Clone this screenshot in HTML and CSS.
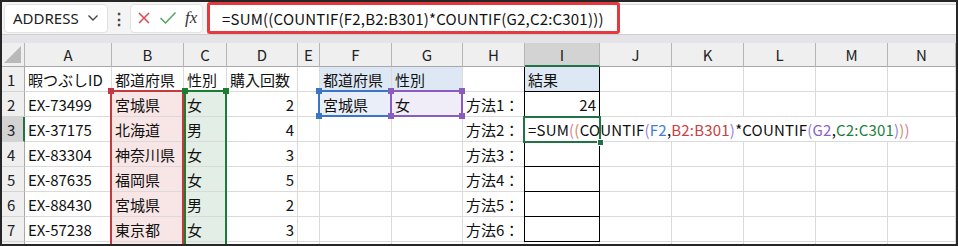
FILE: index.html
```html
<!DOCTYPE html>
<html lang="ja">
<head>
<meta charset="UTF-8">
<title>COUNTIF</title>
<link rel="stylesheet" href="styles.css">
</head>
<body>
<div class="window">

  <div class="formula-bar">
    <div class="name-box">
      <span>ADDRESS</span>
      <svg width="12" height="8" viewBox="0 0 12 8"><polyline points="1.5,1.5 6,6 10.5,1.5" fill="none" stroke="#444" stroke-width="1.4"/></svg>
    </div>
    <div class="dots">⋮</div>
    <div class="fx-box">
      <svg width="14" height="14" viewBox="0 0 14 14"><path d="M2 2 L12 12 M12 2 L2 12" stroke="#e0464b" stroke-width="1.5"/></svg>
      <svg width="18" height="14" viewBox="0 0 18 14"><polyline points="1.5,7 6.5,12 16.5,1.5" fill="none" stroke="#54a35c" stroke-width="1.5"/></svg>
      <span class="fx">fx</span>
    </div>
    <div class="formula-input">
      <div class="formula-mark">=SUM((COUNTIF(F2,B2:B301)*COUNTIF(G2,C2:C301)))</div>
    </div>
  </div>

  <div class="strip"></div>

  <div class="sheet">
    <div class="grid">
      <!-- column headers -->
      <div class="corner"></div>
      <div class="hd">A</div><div class="hd">B</div><div class="hd">C</div><div class="hd">D</div><div class="hd">E</div>
      <div class="hd">F</div><div class="hd">G</div><div class="hd">H</div><div class="hd sel">I</div><div class="hd">J</div>
      <div class="hd">K</div><div class="hd">L</div><div class="hd">M</div><div class="hd">N</div>

      <!-- 1 -->
      <div class="rh">1</div>
      <div class="c">暇つぶしID</div><div class="c">都道府県</div><div class="c">性別</div><div class="c">購入回数</div><div class="c"></div>
      <div class="c blue">都道府県</div><div class="c blue">性別</div><div class="c"></div><div class="c res blue">結果</div>
      <div class="c"></div><div class="c"></div><div class="c"></div><div class="c"></div><div class="c"></div>

      <!-- 2 -->
      <div class="rh">2</div>
      <div class="c">EX-73499</div><div class="c pink">宮城県</div><div class="c mint">女</div><div class="c num">2</div><div class="c"></div>
      <div class="c f2">宮城県</div><div class="c g2">女</div><div class="c">方法1：</div><div class="c res num">24</div>
      <div class="c"></div><div class="c"></div><div class="c"></div><div class="c"></div><div class="c"></div>

      <!-- 3 -->
      <div class="rh sel">3</div>
      <div class="c">EX-37175</div><div class="c pink">北海道</div><div class="c mint">男</div><div class="c num">4</div><div class="c"></div>
      <div class="c"></div><div class="c"></div><div class="c">方法2：</div>
      <div class="c editing">=SUM<span class="p1">(</span><span class="p2">(</span>COUNTIF<span class="p3">(</span><span class="r-blue">F2</span>,<span class="r-red">B2:B301</span><span class="p3">)</span>*COUNTIF<span class="p3">(</span><span class="r-purple">G2</span>,<span class="r-green">C2:C301</span><span class="p3">)</span><span class="p2">)</span><span class="p1">)</span></div>

      <!-- 4 -->
      <div class="rh">4</div>
      <div class="c">EX-83304</div><div class="c pink">神奈川県</div><div class="c mint">女</div><div class="c num">3</div><div class="c"></div>
      <div class="c"></div><div class="c"></div><div class="c">方法3：</div><div class="c res"></div>
      <div class="c"></div><div class="c"></div><div class="c"></div><div class="c"></div><div class="c"></div>

      <!-- 5 -->
      <div class="rh">5</div>
      <div class="c">EX-87635</div><div class="c pink">福岡県</div><div class="c mint">女</div><div class="c num">5</div><div class="c"></div>
      <div class="c"></div><div class="c"></div><div class="c">方法4：</div><div class="c res"></div>
      <div class="c"></div><div class="c"></div><div class="c"></div><div class="c"></div><div class="c"></div>

      <!-- 6 -->
      <div class="rh">6</div>
      <div class="c">EX-88430</div><div class="c pink">宮城県</div><div class="c mint">男</div><div class="c num">2</div><div class="c"></div>
      <div class="c"></div><div class="c"></div><div class="c">方法5：</div><div class="c res"></div>
      <div class="c"></div><div class="c"></div><div class="c"></div><div class="c"></div><div class="c"></div>

      <!-- 7 -->
      <div class="rh">7</div>
      <div class="c">EX-57238</div><div class="c pink">東京都</div><div class="c mint">女</div><div class="c num">3</div><div class="c"></div>
      <div class="c"></div><div class="c"></div><div class="c">方法6：</div><div class="c res"></div>
      <div class="c"></div><div class="c"></div><div class="c"></div><div class="c"></div><div class="c"></div>

      <!-- 8 (only its top edge is visible) -->
      <div class="rh"></div>
      <div class="c"></div><div class="c pink"></div><div class="c mint"></div><div class="c"></div><div class="c"></div>
      <div class="c"></div><div class="c"></div><div class="c"></div><div class="c"></div>
      <div class="c"></div><div class="c"></div><div class="c"></div><div class="c"></div><div class="c"></div>
    </div>

    <!-- reference highlights drawn over the grid -->
    <div class="range range-b"><i class="h tl"></i></div>
    <div class="range range-c"><i class="h tl"></i><i class="h tr"></i></div>
    <div class="range range-f"><i class="h tl"></i><i class="h tr"></i><i class="h bl"></i><i class="h br"></i></div>
    <div class="range range-g"><i class="h tl"></i><i class="h tr"></i><i class="h bl"></i><i class="h br"></i></div>
    <div class="active"><i class="fill"></i></div>
  </div>

</div>
</body>
</html>
```

FILE: styles.css
```css
*{ box-sizing: border-box; }

body{
    margin: 0;
    font-family: "Noto Sans CJK JP", "Noto Sans", sans-serif;
    font-size: 15px;
    color: #111;
}

.window{
    width: 958px;
    height: 246px;
    border: 2px solid #262626;
    overflow: hidden;
    background: #fff;
}

/* ---------- formula bar ---------- */
.formula-bar{
    display: flex;
    align-items: center;
    height: 33px;
    background: #f4f4f4;
    border-bottom: 1px solid #cfcfcf;
    padding-left: 2px;
}

.name-box{
    display: flex;
    align-items: center;
    justify-content: space-between;
    width: 104px;
    height: 29px;
    padding: 0 8px 0 8px;
    background: #fff;
    border: 1px solid #e2e2e2;
    border-radius: 4px;
    font-family: "Noto Sans", sans-serif;
    font-size: 15px;
    color: #222;
}

.dots{
    width: 22px;
    text-align: center;
    font-size: 16px;
    font-weight: bold;
    color: #444;
}

.fx-box{
    display: flex;
    align-items: center;
    gap: 8px;
    width: 73px;
    height: 29px;
    padding-left: 6px;
    background: #fff;
    border: 1px solid #e2e2e2;
    border-radius: 4px;
}
.fx{
    font-family: "Liberation Serif", serif;
    font-style: italic;
    font-size: 17px;
    color: #333;
}

.formula-input{
    flex: 1;
    align-self: stretch;
    margin: 2px 0 0 4px;
    background: #fff;
    border-top: 1px solid #d8d8d8;
    border-left: 1px solid #d8d8d8;
}
.formula-mark{
    width: 413px;
    height: 32px;
    margin: -3px 0 0 -1px;
    padding: 3px 0 0 12px;
    border: 3px solid #e4393d;
    border-radius: 3px;
    font-size: 15px;
    line-height: 22px;
    letter-spacing: 0.2px;
    white-space: nowrap;
}

.strip{
    height: 8px;
    background: #e4e4e8;
}

/* ---------- sheet ---------- */
.sheet{
    position: relative;
    height: 201px;
    overflow: hidden;
}

.grid{
    display: grid;
    grid-template-columns: 23px 87px 72px 43px 71px 22px 72px 71px 62px 75px 72px 72px 72px 72px 68px;
    grid-template-rows: 24px repeat(8, 25px);
}

.corner{
    position: relative;
    background: #efefef;
    border-right: 1px solid #b5b5b5;
    border-bottom: 1px solid #a8a8a8;
}
.corner::after{
    content: "";
    position: absolute;
    right: 3px;
    bottom: 3px;
    border-left: 17px solid transparent;
    border-bottom: 17px solid #b9b9b9;
}

.hd{
    display: flex;
    align-items: center;
    justify-content: center;
    background: #efefef;
    border-right: 1px solid #b5b5b5;
    border-bottom: 1px solid #a8a8a8;
    color: #222;
}
.hd.sel{
    background: #d3d3d3;
    border-bottom: 2px solid #217346;
}

.rh{
    display: flex;
    align-items: center;
    padding-left: 5px;
    background: #efefef;
    border-right: 1px solid #a8a8a8;
    border-bottom: 1px solid #d4d4d4;
    color: #222;
}
.rh.sel{
    background: #d3d3d3;
    border-right: 2px solid #217346;
}

.c{
    display: flex;
    align-items: center;
    padding: 0 3px;
    white-space: nowrap;
    border-right: 1px solid #dadada;
    border-bottom: 1px solid #dadada;
}
.c.num{ justify-content: flex-end; }

.pink{ background: #f8e5e5; }
.mint{ background: #e3efe6; }
.blue{ background: #dde8f4; }
.f2{ background: #e9eef8; }
.g2{ background: #f1edf8; }

.res{
    margin-left: -1px;
    border-left: 1px solid #000;
    border-right: 1px solid #000;
    border-bottom: 1px solid #000;
}

.editing{
    grid-column: span 6;
    border-right: none;
    letter-spacing: 0.2px;
    color: #111;
}
.p1{ color: #e07aa6; }
.p2{ color: #d18e54; }
.p3{ color: #9b80d6; }
.r-blue{ color: #3b7dd8; }
.r-red{ color: #c9403f; }
.r-purple{ color: #8b5fc4; }
.r-green{ color: #1c7f3c; }

/* ---------- highlights ---------- */
.range{
    position: absolute;
    border: 2px solid;
}
.range-b{ left: 108px; top: 47px; width: 74px; height: 200px; border-color: #c4383f; }
.range-c{ left: 182px; top: 47px; width: 43px; height: 200px; border-color: #1b7d34; }
.range-f{ left: 316px; top: 47px; width: 74px; height: 27px; border-color: #3a75c8; }
.range-g{ left: 388px; top: 47px; width: 73px; height: 27px; border-color: #8a5cc0; }

.h{
    position: absolute;
    width: 6px;
    height: 6px;
    background: currentColor;
}
.range-b .h{ color: #c4383f; }
.range-c .h{ color: #1b7d34; }
.range-f .h{ color: #3a75c8; }
.range-g .h{ color: #8a5cc0; }
.h.tl{ left: -4px; top: -4px; }
.h.tr{ right: -4px; top: -4px; }
.h.bl{ left: -4px; bottom: -4px; }
.h.br{ right: -4px; bottom: -4px; }

.active{
    position: absolute;
    left: 521px;
    top: 73px;
    width: 78px;
    height: 27px;
    border: 2px solid #217346;
}
.fill{
    position: absolute;
    right: -5px;
    bottom: -5px;
    width: 7px;
    height: 7px;
    background: #217346;
    border: 1px solid #fff;
}
```
